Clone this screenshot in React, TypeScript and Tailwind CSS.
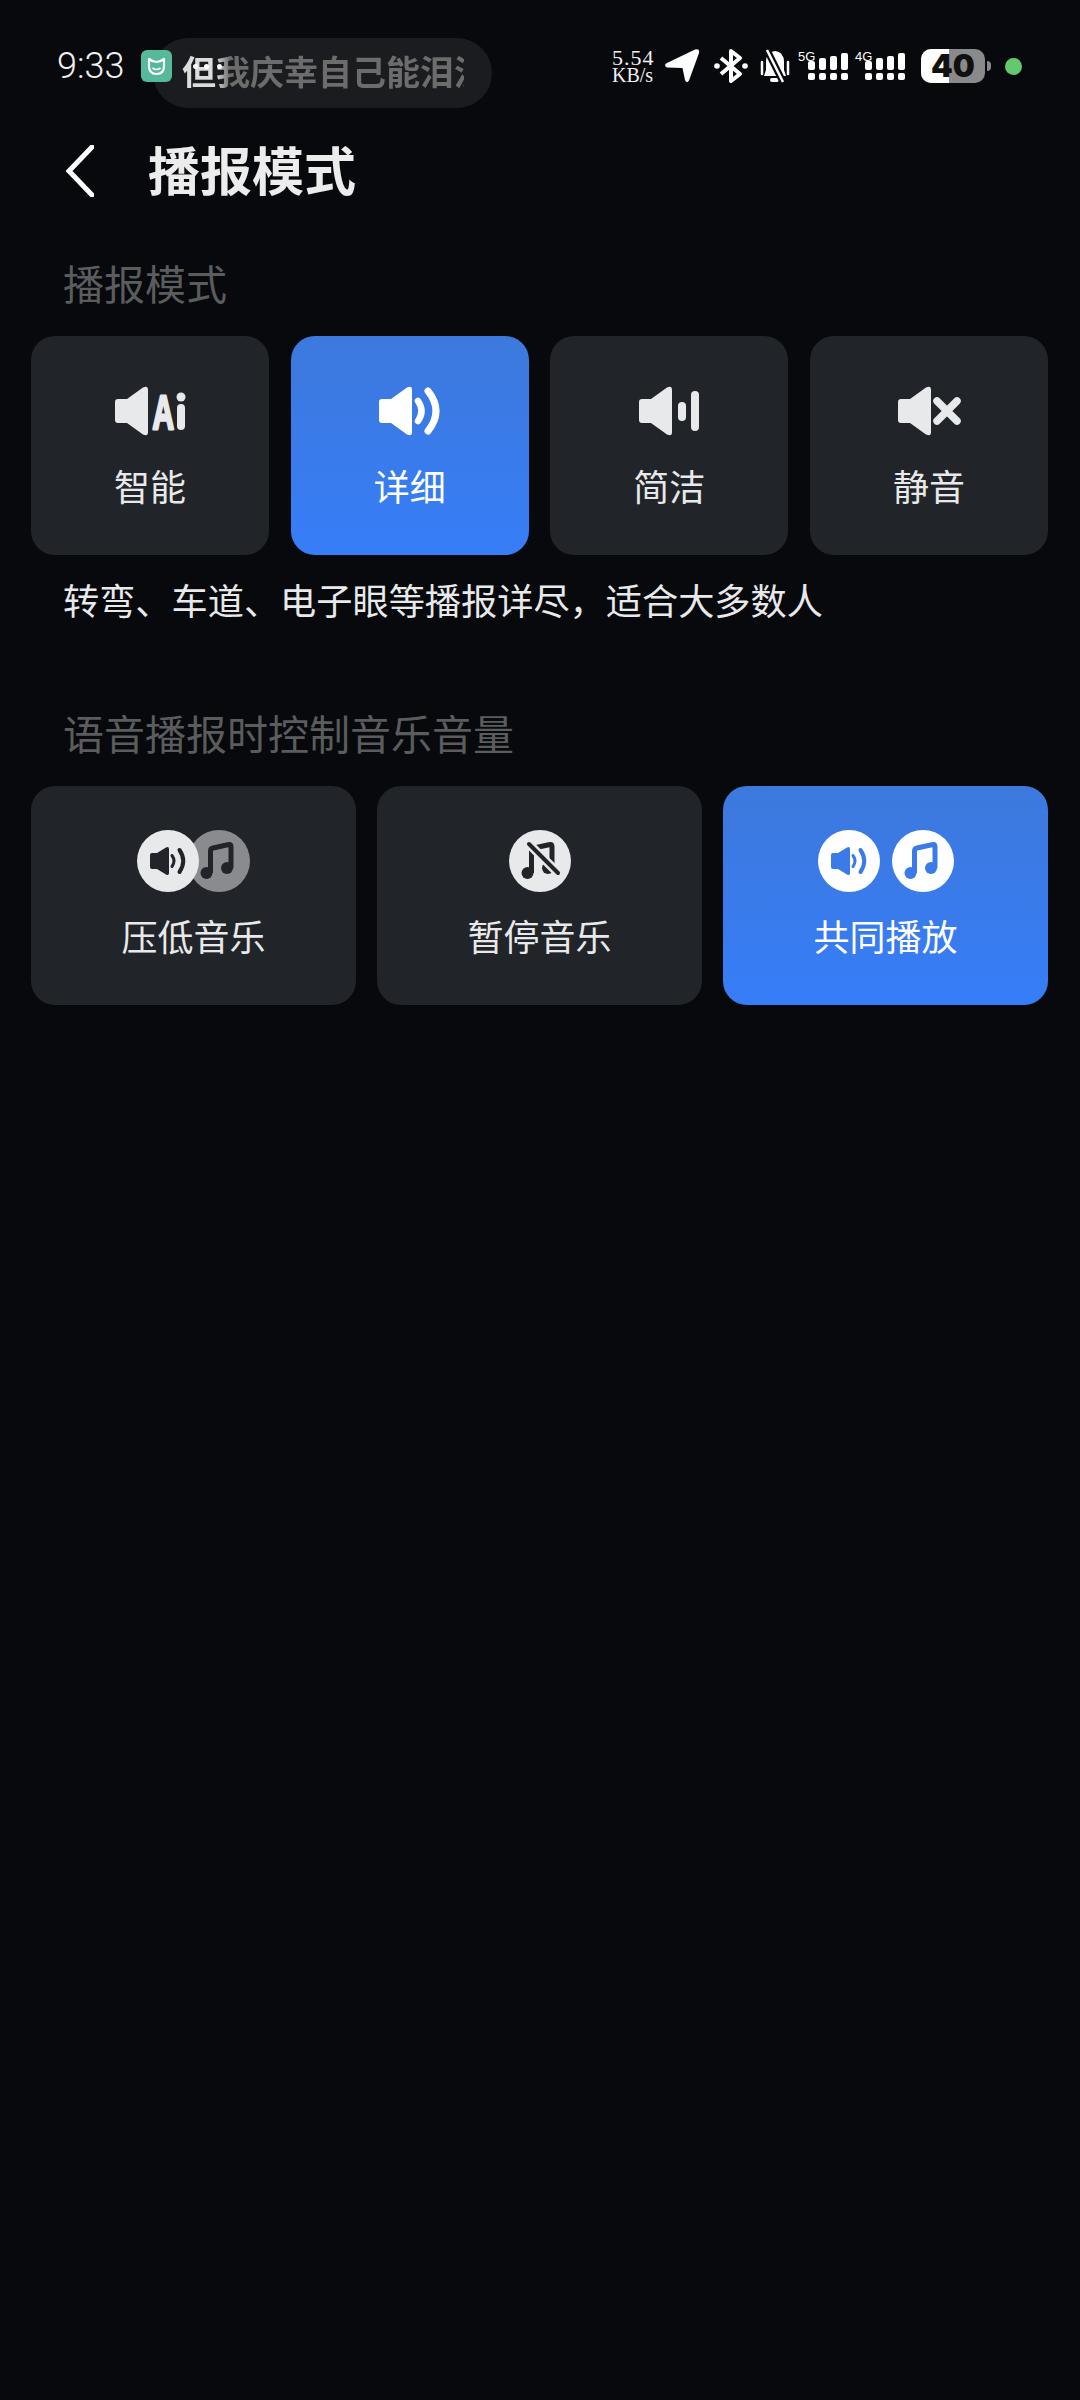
import type { ReactNode } from 'react';

const SPEAKER = 'M3 13H12L28 1.5Q33 -1 33 4V46Q33 51 28 48.5L12 37H3Q0 37 0 34V16Q0 13 3 13Z';

function AiIcon() {
  return (
    <svg width="71" height="50" viewBox="0 0 71 50" fill="currentColor">
      <path d={SPEAKER} />
      <text
        transform="translate(37.5 42.5) scale(0.62 1)"
        fontSize="48"
        fontWeight="700"
        stroke="currentColor"
        strokeWidth="3"
        strokeLinejoin="round"
        fontFamily="'Liberation Sans', sans-serif"
      >
        A
      </text>
      <circle cx="66" cy="11" r="4.5" />
      <rect x="62" y="18" width="8" height="26" rx="4" />
    </svg>
  );
}

function DetailIcon() {
  return (
    <svg width="61" height="50" viewBox="0 0 61 50" fill="currentColor">
      <path d={SPEAKER} />
      <path d="M39 15Q46 25 39 35" fill="none" stroke="currentColor" strokeWidth="6.5" strokeLinecap="round" />
      <path d="M49 5Q65 25 49 45" fill="none" stroke="currentColor" strokeWidth="7" strokeLinecap="round" />
    </svg>
  );
}

function BriefIcon() {
  return (
    <svg width="60" height="50" viewBox="0 0 60 50" fill="currentColor">
      <path d={SPEAKER} />
      <rect x="39" y="16" width="8" height="19" rx="4" />
      <rect x="52" y="5" width="8" height="40" rx="4" />
    </svg>
  );
}

function MuteIcon() {
  return (
    <svg width="63" height="50" viewBox="0 0 63 50" fill="currentColor">
      <path d={SPEAKER} />
      <path d="M39 15L59 35M59 15L39 35" fill="none" stroke="currentColor" strokeWidth="7.5" strokeLinecap="round" />
    </svg>
  );
}

function SoundGlyph({ color }: { color: string }) {
  return (
    <svg width="62" height="62" viewBox="0 0 62 62" fill={color}>
      <path d="M15 23H20L29 17.5Q32 16 32 19V43Q32 46 29 44.5L20 39H15Q13 39 13 37V25Q13 23 15 23Z" />
      <path d="M35 25.5Q39 31 35 36.5" fill="none" stroke={color} strokeWidth="3" strokeLinecap="round" />
      <path d="M42.5 20Q50 31 42.5 42" fill="none" stroke={color} strokeWidth="4" strokeLinecap="round" />
    </svg>
  );
}

function NoteGlyph({ color, muted }: { color: string; muted?: boolean }) {
  return (
    <svg width="62" height="62" viewBox="0 0 62 62" fill={color}>
      <path
        d="M22.5 43V21Q22.5 18.5 25 18L41 14.5Q43 14 43 17V38"
        fill="none"
        stroke={color}
        strokeWidth="5"
        strokeLinejoin="round"
      />
      <circle cx="18.5" cy="43" r="6" />
      <circle cx="39" cy="38" r="6" />
      {muted && (
        <>
          <path d="M18 12L50 44" stroke="#e8e9ea" strokeWidth="9" />
          <path d="M20 14L49 43" stroke={color} strokeWidth="4" strokeLinecap="round" />
        </>
      )}
    </svg>
  );
}

function Circle({ className, children }: { className: string; children: ReactNode }) {
  return <div className={`w-[62px] h-[62px] rounded-full ${className}`}>{children}</div>;
}

function Card({
  active,
  label,
  topClass,
  children,
}: {
  active?: boolean;
  label: string;
  topClass: string;
  children: ReactNode;
}) {
  return (
    <div
      className={`flex-1 h-[219px] rounded-[24px] flex flex-col items-center ${topClass} ${
        active
          ? 'bg-gradient-to-b from-[#3d79dd] to-[#367df7] text-white'
          : 'bg-[#212428] text-[#e8e9ea]'
      }`}
    >
      {children}
      <div className="text-[36px] leading-[44px] mt-auto mb-[48px]">{label}</div>
    </div>
  );
}

function SignalBars({ label }: { label: string }) {
  const heights = ['h-[9px]', 'h-[12px]', 'h-[14px]', 'h-[17px]'];
  return (
    <div className="relative w-[50px] h-[34px]">
      <span className="absolute left-0 top-[1px] text-[13px] leading-[13px] text-white font-['Liberation_Sans',sans-serif]">
        {label}
      </span>
      <div className="absolute left-[10px] top-[4px] flex gap-[4px]">
        {heights.map((h, i) => (
          <div key={i} className="flex flex-col justify-end w-[7px] h-[27px] gap-[3px]">
            <div className={`${h} bg-white rounded-[2px]`} />
            <div className="h-[7px] bg-white rounded-[2px]" />
          </div>
        ))}
      </div>
    </div>
  );
}

function StatusBar() {
  return (
    <div className="relative h-[132px] pl-[57px] pr-[58px] flex items-center justify-between">
      <div className="relative z-10 flex items-center">
        <span className="w-[84px] text-[36px] leading-[40px] text-[#f0f0f0] font-light font-['Roboto',sans-serif]">9:33</span>
        <svg width="31" height="32" viewBox="0 0 31 32">
          <rect width="31" height="32" rx="6" fill="#55b99a" />
          <path
            d="M8 9Q12 12 15.5 12Q19 12 23 9V16Q23 24 15.5 24Q8 24 8 16Z"
            fill="none"
            stroke="#fff"
            strokeWidth="2.2"
            strokeLinejoin="round"
          />
          <path d="M11.5 18Q15.5 21 19.5 18" fill="none" stroke="#fff" strokeWidth="1.6" />
        </svg>
      </div>

      {/* lyric pill sits over the status row */}
      <div className="absolute left-[153px] top-[38px] w-[339px] h-[70px] rounded-full bg-[#1a1c1f] pl-[29px] pb-[5px] flex items-center">
        <div className="w-[282px] overflow-hidden whitespace-nowrap text-[34px] font-bold leading-[42px] bg-[linear-gradient(90deg,#dcdcdc_0,#dcdcdc_12%,#6c6c6c_17%,#6c6c6c_100%)] bg-clip-text text-transparent">
          但我庆幸自己能泪流
        </div>
        <div className="absolute left-[40px] top-[26px] w-[5px] h-[5px] rounded-full bg-white" />
        <div className="absolute left-[51px] top-[26px] w-[5px] h-[5px] rounded-full bg-white" />
        <div className="absolute left-[64px] top-[26px] w-[5px] h-[5px] rounded-full bg-white" />
      </div>

      <div className="flex items-center text-white">
        <div className="w-[52px] flex flex-col items-start text-[#f0f0f0] font-['Liberation_Serif',serif]">
          <span className="text-[22px] leading-[19px] tracking-[1px]">5.54</span>
          <span className="text-[20px] leading-[17px]">KB/s</span>
        </div>
        <svg width="36" height="36" viewBox="0 0 36 36" fill="#fff" className="mr-[14px]">
          <path d="M31 1.5Q36 0 35 5L25 32.5Q22.5 36 21 32L18.5 20L3 19.5Q-1 17 3 15Z" />
        </svg>
        <svg width="34" height="36" viewBox="0 0 34 36" fill="none" stroke="#fff" className="mr-[12px]">
          <path d="M7 10L26 26L17 33V3L26 10L7 26" strokeWidth="4" strokeLinejoin="round" />
          <circle cx="3" cy="18" r="2.8" fill="#fff" stroke="none" />
          <circle cx="31" cy="18" r="2.8" fill="#fff" stroke="none" />
        </svg>
        <svg width="30" height="36" viewBox="0 0 30 36" fill="#fff" className="mr-[8px]">
          <path d="M15 3Q6 4 6 14V22L4 28H26L24 22V14Q24 4 15 3Z" />
          <rect x="10" y="30" width="9" height="4" rx="2" />
          <path d="M2 14V26M28 14V26" stroke="#fff" strokeWidth="2.5" strokeLinecap="round" />
          <path d="M7 2L23 34" stroke="#0a0c0f" strokeWidth="7" />
          <path d="M7 2L23 34" stroke="#fff" strokeWidth="2.5" />
        </svg>
        <SignalBars label="5G" />
        <div className="w-[7px]" />
        <SignalBars label="4G" />
        <div className="w-[16px]" />
        <div className="relative w-[64px] h-[34px] rounded-[10px] bg-[#8a8a8a] flex items-center justify-center">
          <div className="absolute left-0 top-0 bottom-0 w-[28px] rounded-l-[10px] bg-white" />
          <span className="relative text-[31px] font-black leading-[34px] text-[#101010] font-['Inter',sans-serif]">
            40
          </span>
        </div>
        <div className="w-[4px] h-[10px] ml-[2px] rounded-r-full bg-[#8a8a8a]" />
        <div className="w-[17px] h-[17px] ml-[14px] rounded-full bg-[#62c96f]" />
      </div>
    </div>
  );
}

export default function App() {
  return (
    <div className="w-[1080px] h-[2400px] bg-[#07090c] font-['Noto_Sans_CJK_SC',sans-serif]">
      <StatusBar />

      <div className="h-[78px] pl-[66px] flex items-center">
        <svg width="28" height="52" viewBox="0 0 28 52" fill="none" stroke="#fff" strokeWidth="5" strokeLinecap="round">
          <path d="M26 2L3 26L26 50" />
        </svg>
        <h1 className="ml-[54px] pb-[5px] text-[52px] leading-[60px] font-bold text-[#ececec]">播报模式</h1>
      </div>

      <h2 className="mt-[47px] pl-[63px] text-[41px] leading-[50px] font-normal text-[#5a5c5e]">播报模式</h2>
      <div className="mt-[29px] pl-[31px] pr-[32px] flex gap-[21.67px]">
        <Card label="智能" topClass="pt-[50px]">
          <AiIcon />
        </Card>
        <Card label="详细" topClass="pt-[50px]" active>
          <DetailIcon />
        </Card>
        <Card label="简洁" topClass="pt-[50px]">
          <BriefIcon />
        </Card>
        <Card label="静音" topClass="pt-[50px]">
          <MuteIcon />
        </Card>
      </div>

      <p className="mt-[24px] pl-[63px] text-[36.2px] leading-[40px] text-[#e8e9ea]">
        转弯、车道、电子眼等播报详尽，适合大多数人
      </p>

      <h2 className="mt-[88px] pl-[63px] text-[41px] leading-[50px] font-normal text-[#5a5c5e]">
        语音播报时控制音乐音量
      </h2>
      <div className="mt-[29px] pl-[31px] pr-[32px] flex gap-[21px]">
        <Card label="压低音乐" topClass="pt-[44px]">
          <div className="flex">
            <Circle className="bg-[#8a8b8f] order-2 -ml-[11px]">
              <NoteGlyph color="#212428" />
            </Circle>
            <Circle className="bg-[#e8e9ea] order-1 relative">
              <SoundGlyph color="#212428" />
            </Circle>
          </div>
        </Card>
        <Card label="暂停音乐" topClass="pt-[44px]">
          <Circle className="bg-[#e8e9ea]">
            <NoteGlyph color="#212428" muted />
          </Circle>
        </Card>
        <Card label="共同播放" topClass="pt-[44px]" active>
          <div className="flex gap-[12px]">
            <Circle className="bg-white">
              <SoundGlyph color="#3a7be8" />
            </Circle>
            <Circle className="bg-white">
              <NoteGlyph color="#3a7be8" />
            </Circle>
          </div>
        </Card>
      </div>
    </div>
  );
}
